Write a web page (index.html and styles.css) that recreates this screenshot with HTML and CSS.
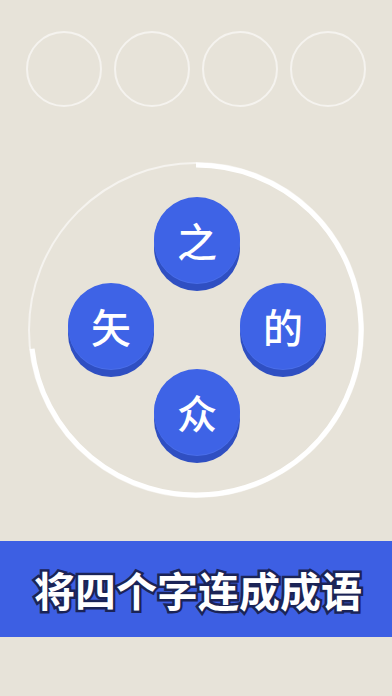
FILE: index.html
```html
<!DOCTYPE html>
<html lang="zh">
<head>
<meta charset="utf-8">
<link rel="stylesheet" href="styles.css">
</head>
<body>
<div class="slots">
  <div class="slot"></div>
  <div class="slot"></div>
  <div class="slot"></div>
  <div class="slot"></div>
</div>
<div class="board">
  <svg class="ring" width="340" height="340" viewBox="0 0 340 340">
    <circle cx="170" cy="170" r="167" fill="none" stroke="#f5f3ef" stroke-width="2"/>
    <path d="M170 5 A165 165 0 1 1 6.1 188.7" fill="none" stroke="#ffffff" stroke-width="5"/>
  </svg>
  <div class="keys">
    <div class="key k-top">之</div>
    <div class="key k-left">矢</div>
    <div class="key k-right">的</div>
    <div class="key k-bottom">众</div>
  </div>
</div>
<div class="banner">将四个字连成成语</div>
</body>
</html>
```

FILE: styles.css
```css
html, body {
  margin: 0;
  padding: 0;
}
body {
  width: 392px;
  height: 696px;
  overflow: hidden;
  background: #e7e3d9;
  font-family: "Noto Sans CJK SC", "Noto Sans", sans-serif;
}
.slots {
  display: flex;
  gap: 12px;
  padding: 31px 0 0 26px;
}
.slot {
  width: 76px;
  height: 76px;
  box-sizing: border-box;
  border: 2px solid #f5f3ef;
  border-radius: 50%;
}
.board {
  position: relative;
  width: 340px;
  height: 340px;
  margin: 53px 0 0 26px;
}
.ring {
  position: absolute;
  left: 0;
  top: 0;
}
.keys {
  position: relative;
  display: grid;
  grid-template-columns: 86px 86px 86px;
  grid-template-rows: 86px 86px 86px;
  padding: 37px 0 0 42px;
}
.key {
  width: 86px;
  height: 86px;
  border-radius: 50%;
  background: #3e63e6;
  box-shadow: 0 1px 0 #4a6ee9, 0 8px 0 #2f4fc2;
  color: #ffffff;
  font-size: 40px;
  font-weight: 500;
  display: flex;
  align-items: center;
  justify-content: center;
  line-height: 1;
}
.k-top { grid-column: 2; grid-row: 1; }
.k-left { grid-column: 1; grid-row: 2; }
.k-right { grid-column: 3; grid-row: 2; }
.k-bottom { grid-column: 2; grid-row: 3; }
.banner {
  margin-top: 41px;
  height: 96px;
  background: #3d5fe3;
  display: flex;
  align-items: center;
  justify-content: center;
  color: #ffffff;
  font-size: 41px;
  font-weight: 700;
  letter-spacing: 0;
  padding-left: 4px;
  -webkit-text-stroke: 5px #1c2558;
  paint-order: stroke fill;
  text-shadow: 0 0 2px rgba(20, 30, 80, 0.6);
}
```
